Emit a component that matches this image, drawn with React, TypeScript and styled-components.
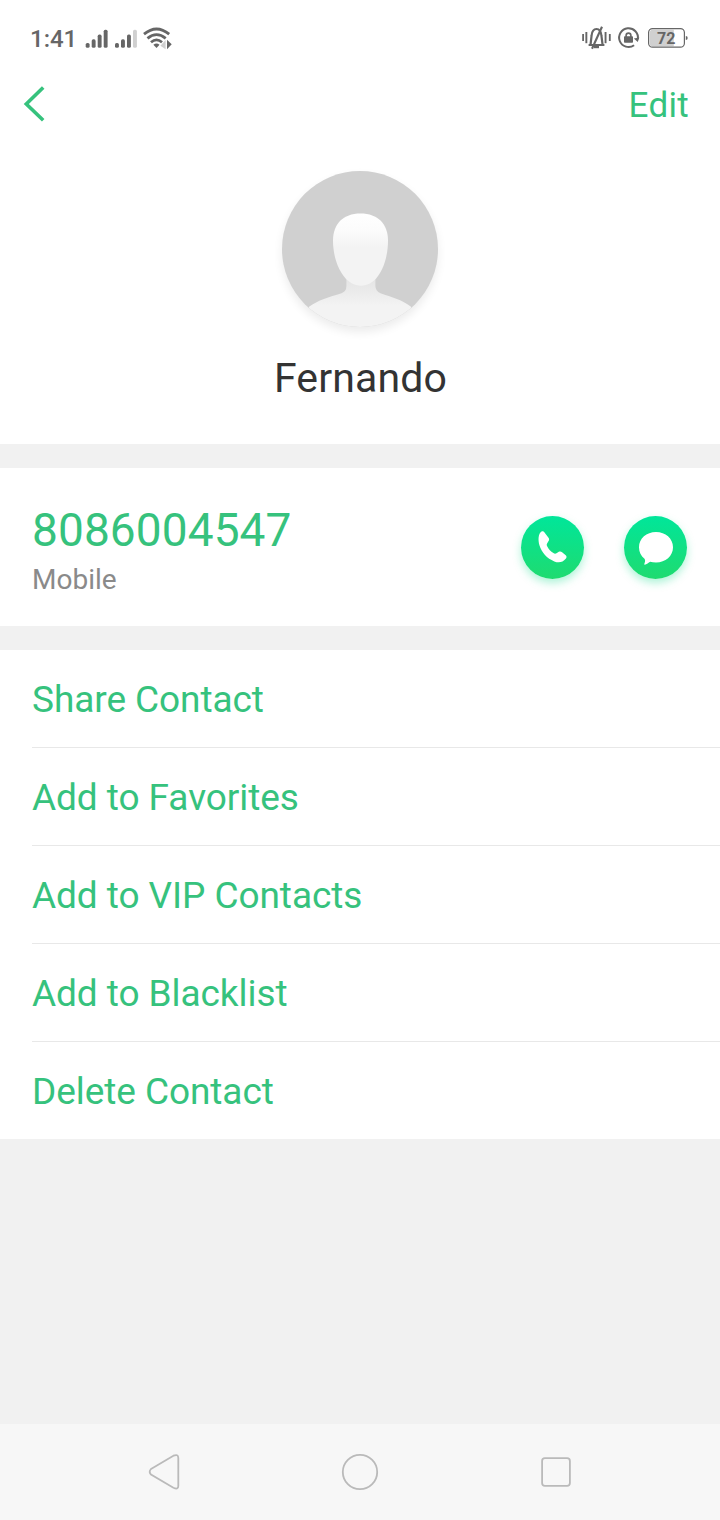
import React from "react";
import styled, { createGlobalStyle } from "styled-components";

const GlobalStyle = createGlobalStyle`
  * { box-sizing: border-box; }
  body { margin: 0; background: #f1f1f1; font-family: Roboto, "Noto Sans", sans-serif; }
`;

const GREEN = "#36c27d";

const Screen = styled.div`
  width: 720px;
  height: 1520px;
  display: flex;
  flex-direction: column;
  background: #f1f1f1;
  overflow: hidden;
`;

const StatusBar = styled.header`
  height: 76px;
  flex: none;
  display: flex;
  justify-content: space-between;
  padding: 0 32px 0 30px;
  background: #fff;
`;

const StatusGroup = styled.div`
  display: flex;
  height: 76px;
`;

const Clock = styled.time`
  width: 55px;
  font-size: 24px;
  line-height: 78px;
  font-weight: 500;
  color: #666;
  white-space: nowrap;
`;

const Drawing = styled.svg`
  display: block;
  flex: none;
`;

const ActionBar = styled.nav`
  height: 64px;
  flex: none;
  display: flex;
  justify-content: space-between;
  padding: 0 31px 0 20px;
  background: #fff;
`;

const PlainButton = styled.button`
  border: 0;
  padding: 0;
  background: none;
  font: inherit;
  color: ${GREEN};
`;

const EditButton = styled(PlainButton)`
  font-size: 35px;
  line-height: 60px;
  height: 60px;
  letter-spacing: 0.3px;
`;

const Profile = styled.section`
  height: 304px;
  flex: none;
  display: flex;
  flex-direction: column;
  align-items: center;
  padding-top: 31px;
  background: #fff;
`;

const Avatar = styled.div`
  width: 156px;
  height: 156px;
  border-radius: 50%;
  overflow: hidden;
  background: #d0d0d0;
  box-shadow: 0 5px 10px rgba(0, 0, 0, 0.08);
`;

const Name = styled.h1`
  margin: 27px 0 0;
  padding-left: 1px;
  font-size: 41px;
  font-weight: 400;
  line-height: 48px;
  letter-spacing: 0.15px;
  color: #333;
`;

const PhoneCard = styled.section`
  height: 158px;
  flex: none;
  margin: 24px 0;
  padding: 0 33px 0 32px;
  display: flex;
  justify-content: space-between;
  background: #fff;
`;

const PhoneText = styled.div`
  padding-top: 35px;
`;

const PhoneNumber = styled.div`
  font-size: 46px;
  line-height: 54px;
  letter-spacing: 0.1px;
  color: ${GREEN};
`;

const PhoneLabel = styled.div`
  margin-top: 7px;
  font-size: 28px;
  line-height: 32px;
  color: #8a8a8a;
`;

const PhoneActions = styled.div`
  display: flex;
  gap: 40.5px;
  padding-top: 47.7px;
`;

const RoundButton = styled.button`
  width: 63px;
  height: 63px;
  border: 0;
  padding: 0;
  border-radius: 50%;
  background: linear-gradient(#00e69a, #1fdb70);
  box-shadow: 0 4px 8px rgba(20, 222, 140, 0.35);
`;

const MenuList = styled.ul`
  list-style: none;
  margin: 0;
  padding: 0 0 0 32px;
  flex: none;
  background: #fff;
`;

const MenuItem = styled.li<{ $last?: boolean }>`
  height: ${(p) => (p.$last ? 97 : 98)}px;
  border-bottom: ${(p) => (p.$last ? "0" : "1px solid #e8e8e8")};
  font-size: 37px;
  line-height: 100px;
  letter-spacing: -0.07px;
  color: ${GREEN};
`;

const NavigationBar = styled.footer`
  height: 96px;
  flex: none;
  margin-top: auto;
  display: flex;
  justify-content: space-between;
  align-items: center;
  padding: 0 144px;
  background: #f7f7f7;
`;

const BAR_TOPS = [43, 39.3, 34.6, 29.7];

const SignalBars = ({ x, weak }: { x: number; weak?: boolean }) => (
  <g>
    {BAR_TOPS.map((top, i) => (
      <rect
        key={top}
        x={x + i * 6}
        y={top}
        width={3.9}
        height={47.8 - top}
        rx={1.6}
        fill={weak && i === 3 ? "#d0d0d0" : "#666"}
      />
    ))}
  </g>
);

const SignalIcons = () => (
  <Drawing width="95" height="76" viewBox="85 0 95 76">
    <SignalBars x={85.7} />
    <SignalBars x={115} weak />
    <g fill="none" stroke="#666" strokeWidth="2.8">
      <path d="M144 34.2Q156.5 23.8 169.2 34.2" />
      <path d="M147.5 38.4Q156.5 30.8 165.7 38.4" />
      <path d="M151 42.2Q156.5 37.6 162 42.2" />
    </g>
    <path d="M153.4 44.8Q156.5 42.4 159.5 44.8L156.5 48Z" fill="#666" />
    <path d="M165.6 40V49.2L160.4 45.8Z" fill="#d0d0d0" />
    <path d="M167 39.8L171.7 44.2L167 49.2Z" fill="#666" />
  </Drawing>
);

const DeviceIcons = () => (
  <Drawing width="108" height="76" viewBox="580 0 108 76">
    <g fill="#666">
      <rect x="582.2" y="34" width="1.8" height="7" />
      <rect x="585.4" y="32" width="1.9" height="11.2" />
      <rect x="604.6" y="32" width="1.9" height="11.2" />
      <rect x="608.9" y="34" width="1.8" height="7" />
      <path d="M594 46H599V48.2H594Z" />
    </g>
    <path
      d="M588.6 45H604.4M590.5 45L591.6 35.5Q592.2 29 596.5 29T601.4 35.5L602.6 45"
      fill="none"
      stroke="#666"
      strokeWidth="2.2"
    />
    <path d="M602 26.8L592 48.8" stroke="#666" strokeWidth="2.1" />

    <path
      d="M634.1 45.2A9.4 9.4 0 1 1 637.8 39.2"
      fill="none"
      stroke="#666"
      strokeWidth="2"
    />
    <path d="M633.8 38.4L639.3 37.6L637.8 42Z" fill="#666" />
    <rect x="624" y="36.2" width="9" height="6.5" rx="0.8" fill="#666" />
    <path
      d="M626.1 37V35.5A2.4 2.4 0 0 1 630.9 35.5V37"
      fill="none"
      stroke="#666"
      strokeWidth="1.6"
    />

    <path d="M652 29.7H673.8V46.3H652Q649.8 46.3 649.8 43.8V32.2Q649.8 29.7 652 29.7Z" fill="#d0d0d0" />
    <rect x="648.6" y="28.6" width="35.8" height="18.6" rx="4" fill="none" stroke="#666" strokeWidth="1.2" />
    <path d="M685.8 36Q687.7 36 687.7 38T685.8 40Z" fill="#666" />
    <text
      x="666.2"
      y="44"
      textAnchor="middle"
      fontFamily="Roboto, sans-serif"
      fontSize="16"
      fontWeight="700"
      fill="#666"
    >
      72
    </text>
  </Drawing>
);

const BackIcon = () => (
  <Drawing width="30" height="64" viewBox="20 76 30 64">
    <path d="M43.2 87.5L26.3 104L43.2 120.3" fill="none" stroke={GREEN} strokeWidth="3.6" />
  </Drawing>
);

const Silhouette = () => (
  <Drawing width="156" height="156" viewBox="282 171 156 156">
    <defs>
      <linearGradient id="face" x1="0" y1="0" x2="0" y2="1">
        <stop offset="0" stopColor="#fff" />
        <stop offset="0.22" stopColor="#fcfcfc" />
        <stop offset="0.48" stopColor="#f3f3f3" />
        <stop offset="1" stopColor="#f3f3f3" />
      </linearGradient>
      <linearGradient id="torso" gradientUnits="userSpaceOnUse" x1="0" y1="280" x2="0" y2="306">
        <stop offset="0" stopColor="#e5e5e5" />
        <stop offset="1" stopColor="#f3f3f3" />
      </linearGradient>
    </defs>
    <path
      d="M346.4 276V286Q346.4 291.5 341.5 293.2C329 297 318 300 309 306.8V330H411V306.8C403 300 391.5 297 380.5 293.2Q375.4 291 375.4 286V276Z"
      fill="url(#torso)"
    />
    <path
      d="M360.5 213.4C378 213.4 388 224 388 240.5C388 263 378 285.7 361 285.7C344 285.7 333 263 333 240.5C333 224 343 213.4 360.5 213.4Z"
      fill="url(#face)"
    />
  </Drawing>
);

const CallIcon = () => (
  <Drawing width="63" height="63" viewBox="520.5 516 63 63">
    <path
      d="M541 531.6C542.3 531 543.5 531.6 544.4 533L548 537.8C549 539.2 548.7 540.2 547.9 541.2L546.6 543.4C546 544.5 546.2 545.3 546.8 546.4C548.2 549 550.2 551.4 552.9 553.1C554 553.8 555 553.9 556 553.2L558.3 551.8C559.5 551.1 560.5 551.3 561.6 552.2L565.2 555.2C566.4 556.3 566.2 557.5 565.2 558.8C562.3 562.4 558.3 563.2 553.8 561.4C546.5 558.6 541.2 552.6 539 545.6C537.4 540.2 537.7 533.6 541 531.6Z"
      fill="#fff"
    />
  </Drawing>
);

const MessageIcon = () => (
  <Drawing width="63" height="63" viewBox="624 516 63 63">
    <path
      d="M656 532C665.5 532 673 538.5 673 547.3S665.5 562.5 656 562.5C653.8 562.5 652 562.3 650.2 561.8C648.5 562.8 646.7 564.2 644.7 564.7C644 564.7 644.3 564 644.7 562.8C645.2 561.3 645.3 559.8 644.5 558.7C641 556 639 552 639 547.3C639 538.5 646.5 532 656 532Z"
      fill="#fff"
    />
  </Drawing>
);

const BackKey = () => (
  <Drawing width="40" height="40" viewBox="144 1452 40 40">
    <path
      d="M151 1469L173.4 1455.7Q178.3 1453.6 178.3 1458V1486Q178.3 1490 173.4 1487.7L151 1474.6Q148.4 1471.8 151 1469Z"
      fill="none"
      stroke="#bababa"
      strokeWidth="1.8"
    />
  </Drawing>
);

const HomeKey = () => (
  <Drawing width="40" height="40" viewBox="0 0 40 40">
    <circle cx="20" cy="20" r="17.2" fill="none" stroke="#bababa" strokeWidth="1.8" />
  </Drawing>
);

const RecentsKey = () => (
  <Drawing width="40" height="40" viewBox="0 0 40 40">
    <rect x="6.1" y="6.1" width="27.8" height="27.8" rx="2.8" fill="none" stroke="#bababa" strokeWidth="1.8" />
  </Drawing>
);

const MENU = [
  "Share Contact",
  "Add to Favorites",
  "Add to VIP Contacts",
  "Add to Blacklist",
  "Delete Contact",
];

export default function App() {
  return (
    <>
      <GlobalStyle />
      <Screen>
        <StatusBar>
          <StatusGroup>
            <Clock>1:41</Clock>
            <SignalIcons />
          </StatusGroup>
          <StatusGroup>
            <DeviceIcons />
          </StatusGroup>
        </StatusBar>
        <ActionBar>
          <PlainButton aria-label="Back">
            <BackIcon />
          </PlainButton>
          <EditButton>Edit</EditButton>
        </ActionBar>
        <Profile>
          <Avatar>
            <Silhouette />
          </Avatar>
          <Name>Fernando</Name>
        </Profile>
        <PhoneCard>
          <PhoneText>
            <PhoneNumber>8086004547</PhoneNumber>
            <PhoneLabel>Mobile</PhoneLabel>
          </PhoneText>
          <PhoneActions>
            <RoundButton aria-label="Call">
              <CallIcon />
            </RoundButton>
            <RoundButton aria-label="Message">
              <MessageIcon />
            </RoundButton>
          </PhoneActions>
        </PhoneCard>
        <MenuList>
          {MENU.map((label, i) => (
            <MenuItem key={label} $last={i === MENU.length - 1}>
              {label}
            </MenuItem>
          ))}
        </MenuList>
        <NavigationBar>
          <BackKey />
          <HomeKey />
          <RecentsKey />
        </NavigationBar>
      </Screen>
    </>
  );
}
